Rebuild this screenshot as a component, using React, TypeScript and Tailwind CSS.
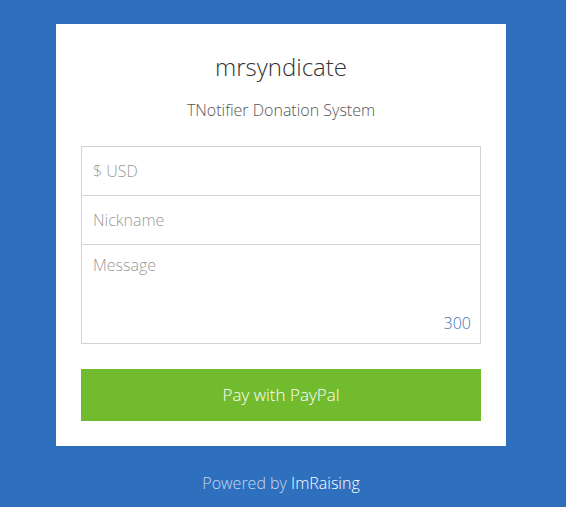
import React from "react";

export default function App() {
  return (
    <div
      className="min-h-[507px] w-full bg-[#2e70be] flex flex-col items-center pt-[24px] pr-[4px]"
      style={{ fontFamily: '"Open Sans", sans-serif' }}
    >
      <div className="w-[450px] bg-white px-[25px] pt-[23px] pb-[25px] flex flex-col">
        <h1 className="text-center text-[24px] leading-[40px] font-light text-[#333]">mrsyndicate</h1>
        <p className="mt-[11px] text-center text-[16px] leading-[24px] font-light text-[#555]">
          TNotifier Donation System
        </p>
        <div className="mt-[24px] border border-[#d2d2d2] flex flex-col">
          <div className="h-[48px] px-[11px] flex items-center text-[16px] font-light text-[#999]">$ USD</div>
          <div className="h-[49px] border-t border-[#d2d2d2] px-[11px] flex items-center text-[16px] font-light text-[#999]">
            Nickname
          </div>
          <div className="h-[99px] border-t border-[#d2d2d2] pl-[11px] pr-[9px] pt-[8px] pb-[8px] flex flex-col justify-between text-[16px] font-light">
            <span className="text-[#999]">Message</span>
            <span className="self-end text-[#3b73b6]">300</span>
          </div>
        </div>
        <button className="mt-[25px] h-[52px] w-full bg-[#72bb2e] text-white text-[17px] font-light">
          Pay with PayPal
        </button>
      </div>
      <div className="mt-[25px] text-[16px] leading-[24px] font-light">
        <span className="text-[#c6d8ef]">Powered by </span>
        <span className="text-white">ImRaising</span>
      </div>
    </div>
  );
}
